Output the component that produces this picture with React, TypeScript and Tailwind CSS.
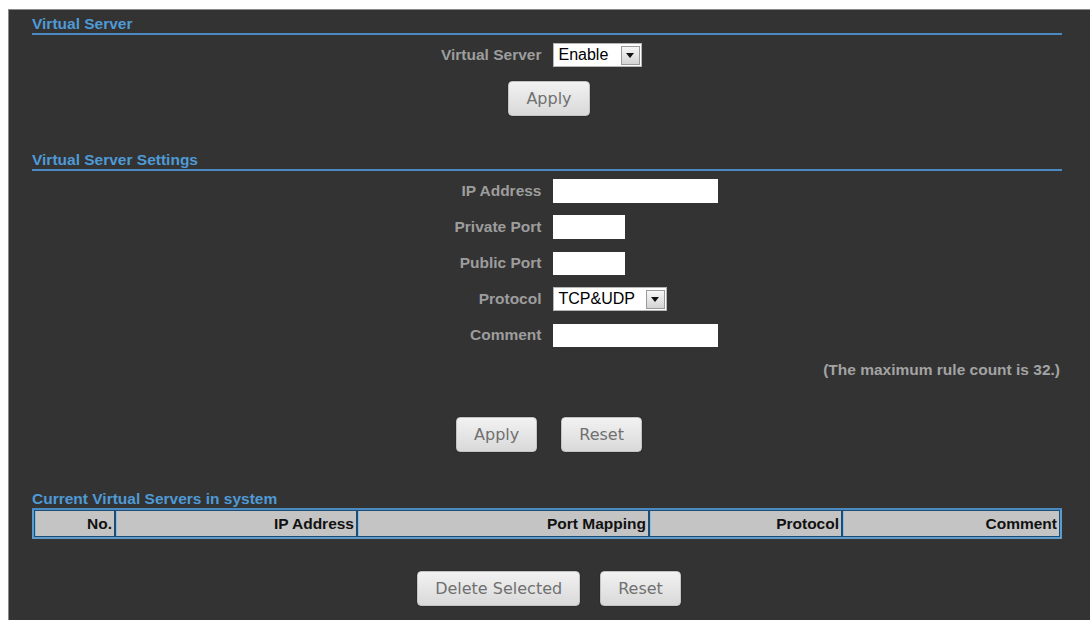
const sans = "font-['Liberation_Sans',Arial,sans-serif]"

function SectionTitle({ children }: { children: string }) {
  return (
    <div className="border-b-2 border-[#4a8ac0] text-[15.5px] font-bold leading-[18px] text-[#4f9ad6]">
      {children}
    </div>
  )
}

function GreyButton({ children }: { children: string }) {
  return (
    <button className="h-[35px] rounded-[4px] border border-[#c4c4c4] bg-linear-to-b from-[#f2f2f2] to-[#d9d9d9] px-[17px] font-['DejaVu_Sans',sans-serif] text-[16px] text-[#707070] shadow-[0_0_1px_#000]">
      {children}
    </button>
  )
}

function FakeSelect({ value, width }: { value: string; width: string }) {
  return (
    <div className={`flex h-[24px] ${width} items-center justify-between border border-[#b5b5b5] bg-white pl-[5px] pr-[1px]`}>
      <span className="text-[16px] leading-none text-black">{value}</span>
      <span className="flex h-[19px] w-[19px] items-center justify-center border border-[#9a9a9a] bg-linear-to-b from-[#f7f7f7] to-[#d4d4d4]">
        <svg width="8" height="5" viewBox="0 0 8 5">
          <path d="M0 0h8L4 5z" fill="#111" />
        </svg>
      </span>
    </div>
  )
}

function Label({ children }: { children: string }) {
  return <div className="text-right text-[15.5px] font-bold leading-[18px] text-[#9d9d9d]">{children}</div>
}

function FormRow({ label, children }: { label: string; children: React.ReactNode }) {
  return (
    <div className="grid h-[24px] grid-cols-[1fr_1fr] items-center gap-x-[11px]">
      <Label>{label}</Label>
      <div className="flex items-center">{children}</div>
    </div>
  )
}

const columns = [
  { label: 'No.', width: 'w-[79px]' },
  { label: 'IP Address', width: 'w-[240px]' },
  { label: 'Port Mapping', width: 'w-[290px]' },
  { label: 'Protocol', width: 'w-[191px]' },
  { label: 'Comment', width: 'flex-1' }
]

export default function App() {
  return (
    <div className={`h-[620px] overflow-hidden bg-white pl-[8px] pt-[9px] ${sans}`}>
      <div className="h-full border-l border-t border-[#8a8a8a] bg-[#333333] pl-[23px] pr-[28px] pt-[5px]">
        {/* Virtual Server */}
        <SectionTitle>Virtual Server</SectionTitle>
        <div className="mt-[8px]">
          <FormRow label="Virtual Server">
            <FakeSelect value="Enable" width="w-[89px]" />
          </FormRow>
        </div>
        <div className="mt-[14px] flex justify-center pl-[4px]">
          <GreyButton>Apply</GreyButton>
        </div>

        {/* Virtual Server Settings */}
        <div className="mt-[35px]">
          <SectionTitle>Virtual Server Settings</SectionTitle>
        </div>
        <div className="mt-[8px] flex flex-col gap-[12px]">
          <FormRow label="IP Address">
            <input className="h-[24px] w-[165px] bg-white outline-none" />
          </FormRow>
          <FormRow label="Private Port">
            <input className="h-[24px] w-[72px] bg-white outline-none" />
          </FormRow>
          <FormRow label="Public Port">
            <input className="h-[23px] w-[72px] bg-white outline-none" />
          </FormRow>
          <FormRow label="Protocol">
            <FakeSelect value="TCP&UDP" width="w-[114px]" />
          </FormRow>
          <FormRow label="Comment">
            <input className="h-[23px] w-[165px] bg-white outline-none" />
          </FormRow>
        </div>
        <div className="mt-[14px] pr-[2px] text-right text-[15.5px] font-bold leading-[18px] text-[#a3a3a3]">
          (The maximum rule count is 32.)
        </div>
        <div className="mt-[38px] flex justify-center gap-[24px] pl-[4px]">
          <GreyButton>Apply</GreyButton>
          <GreyButton>Reset</GreyButton>
        </div>

        {/* Current Virtual Servers */}
        <div className="mt-[38px]">
          <SectionTitle>Current Virtual Servers in system</SectionTitle>
        </div>
        <div className="flex gap-x-[2px] border-x-2 border-b-2 border-[#5e9ccb] bg-[#1d4c74] p-[1px]">
          {columns.map((c) => (
            <div
              key={c.label}
              className={`${c.width} h-[25px] border-l border-[#86bde3] bg-[#c4c4c4] pr-[2px] text-right text-[15.5px] font-bold leading-[25px] text-[#111]`}
            >
              {c.label}
            </div>
          ))}
        </div>
        <div className="mt-[32px] flex justify-center gap-[20px] pl-[4px]">
          <GreyButton>Delete Selected</GreyButton>
          <GreyButton>Reset</GreyButton>
        </div>
      </div>
    </div>
  )
}
